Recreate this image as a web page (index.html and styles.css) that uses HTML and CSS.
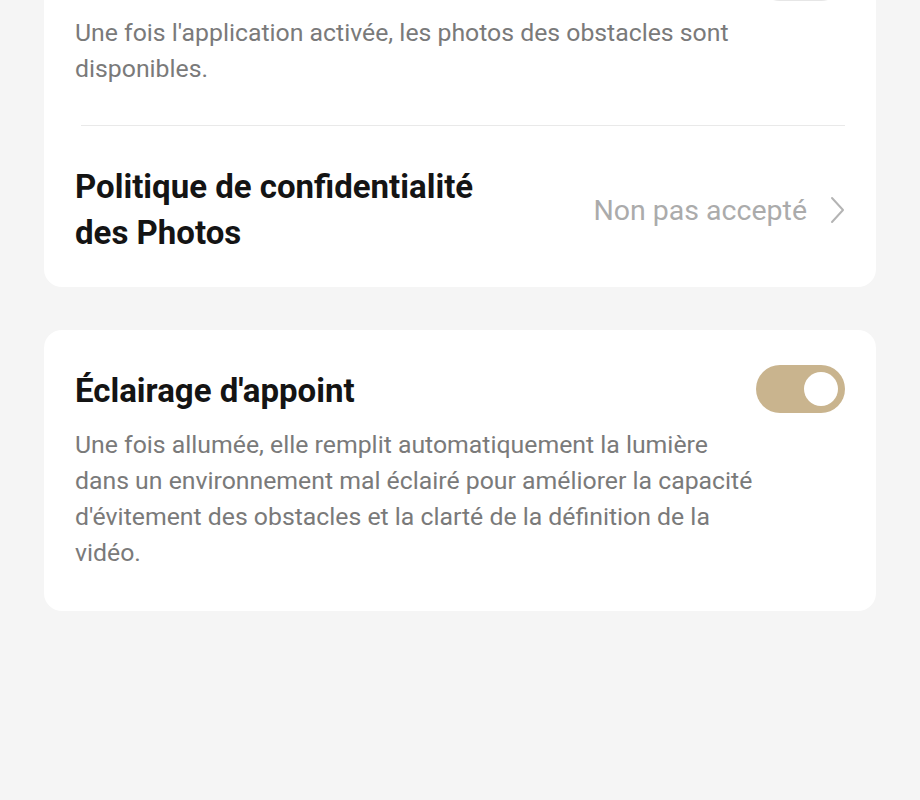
FILE: index.html
```html
<!DOCTYPE html>
<html lang="fr">
<head>
    <meta charset="UTF-8">
    <meta name="viewport" content="width=device-width, initial-scale=1.0">
    <title>Paramètres</title>
    <link rel="stylesheet" href="styles.css">
</head>
<body>
    <div class="page">
        <div class="card card-first">
            <div class="setting">
                <div class="setting-head">
                    <div class="switch"><span class="knob"></span></div>
                </div>
                <p class="setting-desc">Une fois l'application activée, les photos des obstacles sont disponibles.</p>
            </div>
            <div class="divider"></div>
            <div class="link-row">
                <h2 class="setting-title link-title">Politique de confidentialité des Photos</h2>
                <div class="link-value">
                    <span>Non pas accepté</span>
                    <svg class="chevron" width="16" height="28" viewBox="0 0 16 28">
                        <path d="M3 2 L14 14 L3 26" fill="none" stroke="#b4b4b4" stroke-width="2" stroke-linecap="round" stroke-linejoin="round"/>
                    </svg>
                </div>
            </div>
        </div>

        <div class="card">
            <div class="setting">
                <div class="setting-head">
                    <h2 class="setting-title">Éclairage d'appoint</h2>
                    <div class="switch on"><span class="knob"></span></div>
                </div>
                <p class="setting-desc">Une fois allumée, elle remplit automatiquement la lumière dans un environnement mal éclairé pour améliorer la capacité d'évitement des obstacles et la clarté de la définition de la vidéo.</p>
            </div>
        </div>
    </div>
</body>
</html>
```

FILE: styles.css
```css
body {
    margin: 0;
    background-color: #f5f5f5;
    font-family: Roboto, "Liberation Sans", sans-serif;
    overflow: hidden;
}
.page {
    padding: 0 44px;
}
.card {
    background: white;
    border-radius: 18px;
    padding: 35px 31px 40px;
    margin-top: 43px;
}
.card-first {
    margin-top: -83px;
    padding-top: 36px;
    padding-bottom: 0;
}
.setting-head {
    display: flex;
    justify-content: space-between;
    align-items: center;
    height: 48px;
}
.setting-head .setting-title {
    padding-top: 3px;
}
.setting-title {
    margin: 0;
    font-size: 33px;
    font-weight: bold;
    line-height: 46px;
    color: #141414;
}
.setting-desc {
    margin: 14px 0 0;
    font-size: 24.8px;
    line-height: 36px;
    color: #7a7a7a;
    padding-right: 87px;
}
.switch {
    width: 89px;
    height: 48px;
    border-radius: 24px;
    background: #e6e6e6;
    position: relative;
    flex-shrink: 0;
    margin-left: auto;
}
.switch .knob {
    position: absolute;
    top: 7px;
    left: 7px;
    width: 34px;
    height: 34px;
    border-radius: 50%;
    background: white;
}
.switch.on {
    background: #c9b48e;
}
.switch.on .knob {
    left: auto;
    right: 7px;
}
.divider {
    height: 1px;
    background: #e9e9e9;
    margin: 38px 0 0 6px;
}
.link-row {
    display: flex;
    justify-content: space-between;
    align-items: center;
    padding: 38px 0 31px;
}
.link-title {
    width: 430px;
}
.link-value {
    display: flex;
    align-items: center;
    gap: 22px;
    font-size: 28.5px;
    color: #ababab;
}
.chevron {
    display: block;
}
```
